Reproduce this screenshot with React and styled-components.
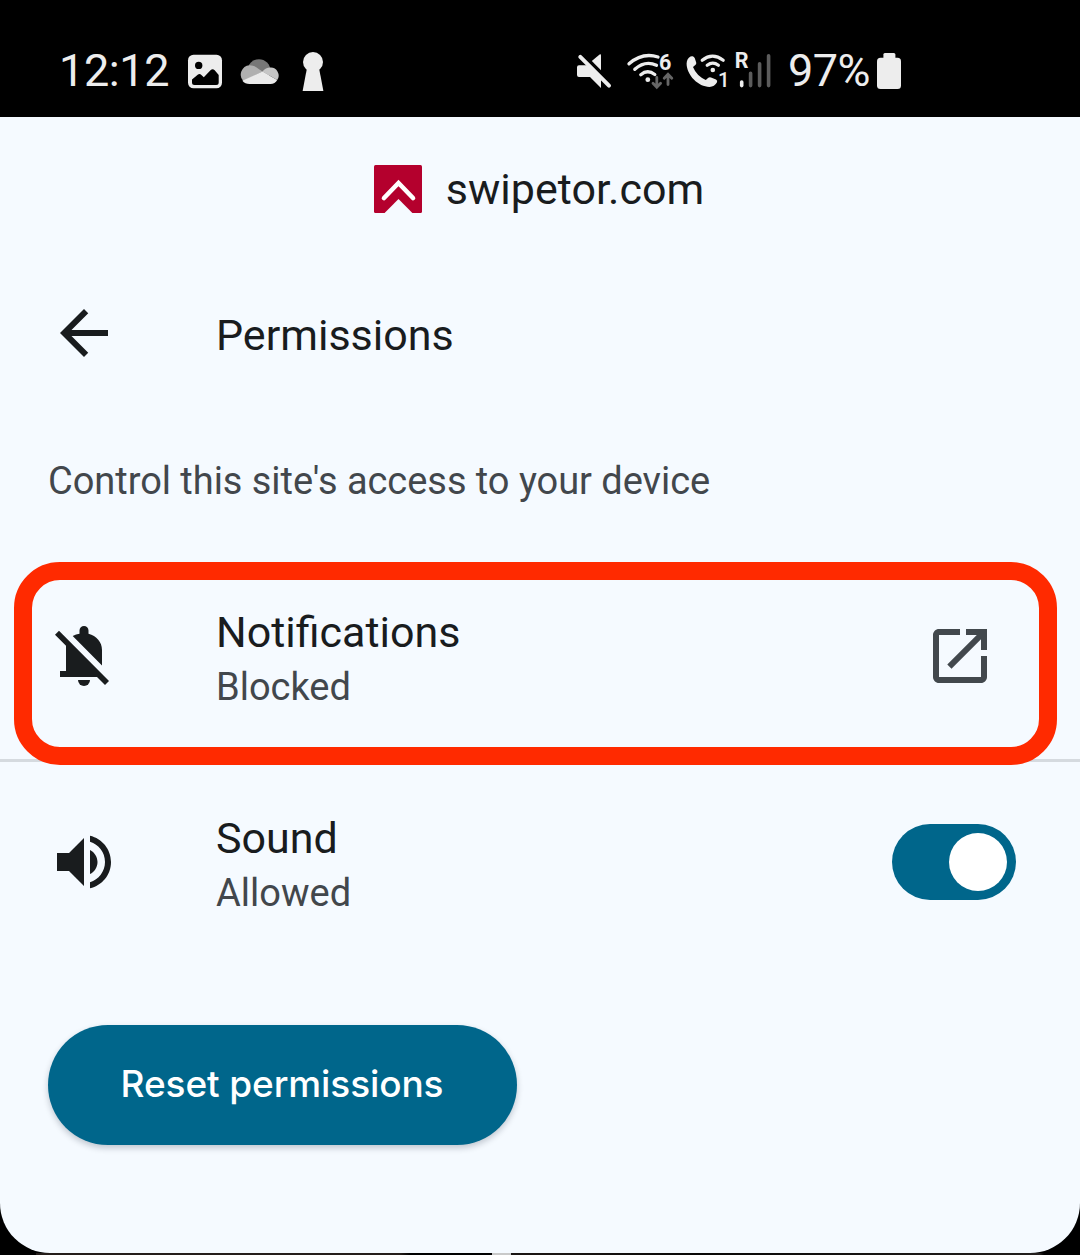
import React from "react";
import styled, { createGlobalStyle } from "styled-components";

const GlobalStyle = createGlobalStyle`
  *, *::before, *::after { box-sizing: border-box; }
  body { margin: 0; background: #000; font-family: Roboto, "Liberation Sans", sans-serif; }
`;

const Screen = styled.div`
  width: 1080px;
  height: 1255px;
  display: flex;
  flex-direction: column;
  background: #000;
  overflow: hidden;
`;

const StatusBar = styled.header`
  flex: none;
  height: 117px;
  padding: 49px 179px 24px 59px;
  display: flex;
  justify-content: space-between;
  color: #ededed;
`;

const StatusGroup = styled.div`
  display: flex;
  align-items: center;
  height: 44px;
`;

const StatusText = styled.span`
  display: block;
  font-size: ${(p) => p.$size}px;
  line-height: 44px;
  letter-spacing: ${(p) => p.$spacing}px;
  width: ${(p) => p.$width}px;
  padding-left: ${(p) => p.$start || 0}px;
  white-space: nowrap;
`;

const StatusIcon = styled.svg`
  flex: none;
  display: block;
  height: 44px;
  margin-left: ${(p) => p.$gap || 0}px;
  overflow: visible;
  font-family: Roboto, sans-serif;
  font-weight: 700;
`;

const Sheet = styled.main`
  flex: none;
  height: 1136px;
  display: flex;
  flex-direction: column;
  align-items: stretch;
  background: #f5faff;
  border-radius: 0 0 50px 50px;
  color: #191c1e;
`;

const SiteHeader = styled.div`
  height: 144px;
  padding-right: 2px;
  display: flex;
  align-items: center;
  justify-content: center;
  gap: 24px;
`;

const SiteName = styled.span`
  font-size: 43px;
  line-height: 50px;
  letter-spacing: 0.04px;
`;

const TitleRow = styled.div`
  height: 144px;
  padding: 0 48px;
  display: flex;
  align-items: center;
  gap: 96px;
`;

const Title = styled.h1`
  margin: 4px 0 0;
  font-size: 43px;
  line-height: 50px;
  font-weight: 400;
`;

const Description = styled.p`
  margin: 0;
  height: 148px;
  padding: 53px 48px 0;
  font-size: 38px;
  line-height: 46px;
  letter-spacing: -0.04px;
  color: #42474c;
`;

const PermissionRow = styled.section`
  position: relative;
  height: ${(p) => p.$height}px;
  padding: 0 ${(p) => p.$end}px 0 48px;
  display: flex;
  align-items: center;
  gap: 96px;
  border-bottom: ${(p) => (p.$divided ? "3px solid #d5dadf" : "0")};
`;

const Highlight = styled.div`
  position: absolute;
  top: 9px;
  left: 14px;
  width: 1043px;
  height: 203px;
  border: 18px solid #ff2a00;
  border-radius: 46px;
  pointer-events: none;
`;

const Labels = styled.div`
  flex: 1;
  margin-top: 8px;
`;

const Name = styled.div`
  font-size: 43px;
  line-height: 54px;
`;

const State = styled.div`
  font-size: 38px;
  line-height: 56px;
  color: #42474c;
`;

const Glyph = styled.svg`
  flex: none;
  display: block;
  width: 72px;
  height: 72px;
  fill: ${(p) => p.$color || "#191c1e"};
`;

const Switch = styled.button`
  flex: none;
  width: 124px;
  height: 76px;
  padding: 0 9px;
  border: 0;
  border-radius: 38px;
  background: #00668b;
  display: flex;
  align-items: center;
  justify-content: flex-end;
`;

const Knob = styled.span`
  width: 58px;
  height: 58px;
  border-radius: 50%;
  background: #fff;
`;

const ResetButton = styled.button`
  margin: 63px 0 0 48px;
  align-self: flex-start;
  width: 469px;
  height: 120px;
  padding: 0 1px 2px 0;
  border: 0;
  border-radius: 60px;
  background: #00668b;
  color: #fff;
  font: 500 37px/46px Inter, sans-serif;
  letter-spacing: -0.1px;
  white-space: nowrap;
  box-shadow: 0 3px 6px rgba(0, 20, 35, 0.22);
`;

const PageEdge = styled.div`
  height: 2px;
  background: linear-gradient(90deg, #000 36px, #241d1a 36px 400px, #000 410px 492px, #c9c9c9 492px 511px, #1a1513 511px 560px, #080706 700px, #231f1d 1040px, #000 1044px);
`;

function Logo() {
  return (
    <svg width="48" height="48" viewBox="0 0 48 48">
      <rect width="48" height="48" rx="1.5" fill="#b4002d" />
      <path d="M10 33 24.5 18 39 33" fill="none" stroke="#fff" strokeWidth="4.6" strokeLinecap="round" />
      <path d="M10.6 48 24.5 34 38.4 48z" fill="#f5faff" />
    </svg>
  );
}

function ClockSide() {
  return (
    <StatusGroup>
      <StatusText $size={45} $spacing={-0.4} $width={129}>12:12</StatusText>
      <StatusIcon width="34" viewBox="188 49 34 44">
        <rect x="188" y="54.7" width="34" height="33.6" rx="5.5" fill="#ededed" />
        <circle cx="198.7" cy="65.4" r="3.7" fill="#000" />
        <path d="M192 79.5 198 74.6Q199.7 73.4 201.4 75L203.8 77.2 210.5 70.3Q212.6 68.2 214.7 70.3L218.7 75V82.5Q218.7 85 216.2 85H194.5Q192 85 192 82.5z" fill="#000" />
      </StatusIcon>
      <StatusIcon $gap={18} width="38" viewBox="240 49 38 44">
        <circle cx="259" cy="70.6" r="11.4" fill="#777" />
        <path d="M249.5 65.2C253.5 65.2 256.4 67 259 69.2L262.5 71.4 243.5 81.3A9.5 9.5 0 0 1 249.5 65.2z" fill="#b0b0b0" />
        <path d="M262.5 71.4Q265.6 67.6 270.3 67.6A7.9 7.9 0 0 1 277.2 80z" fill="#c6c6c6" />
        <path d="M262.5 71.4 277.2 80Q275 84 270.5 84H249.5Q245 84 242.4 80.8z" fill="#eaeaea" />
      </StatusIcon>
      <StatusIcon $gap={24} width="22" viewBox="302 49 22 44">
        <circle cx="313" cy="62" r="10" fill="#ededed" />
        <path d="M306.8 69H319.2L323.4 91H302.6z" fill="#ededed" />
      </StatusIcon>
    </StatusGroup>
  );
}

function SignalSide() {
  return (
    <StatusGroup>
      <StatusIcon width="35" viewBox="576 49 35 44" fill="#ededed">
        <path d="M591.8 61 599.6 54.6Q601 53.6 601 55.2V70.3z" />
        <path d="M579 65.3H588L601 78V88L590 77H579Q577 77 577 75V67.3Q577 65.3 579 65.3z" />
        <path d="M580.3 56.8 609 85.6" stroke="#ededed" strokeWidth="4" strokeLinecap="round" />
      </StatusIcon>
      <StatusIcon $gap={16} width="47" viewBox="627 49 47 44" fill="none" strokeLinecap="round">
        <g stroke="#ededed" strokeWidth="3.3">
          <path d="M629 63.8Q642.5 52 658 57" />
          <path d="M634.8 69.3Q645 60 656.5 65.2" />
          <path d="M640.8 74.7Q647.5 69 654.8 74.5" />
        </g>
        <circle cx="647.8" cy="79.7" r="2.4" fill="#ededed" />
        <text x="659" y="69.8" fontSize="21.5" fill="#ededed">6</text>
        <g stroke="#666" strokeWidth="2.8">
          <path d="M656.8 77.5V87M653 83.3 656.8 87.2 660.6 83.3" />
          <path d="M668 84.5V74.3M664.2 78.2 668 74.3 671.8 78.2" />
        </g>
      </StatusIcon>
      <StatusIcon $gap={12} width="43" viewBox="686 49 43 44" fill="none">
        <path d="M692.6 56.2Q694.2 56.6 694.8 58.2L696.2 62.5Q696.6 64 695.3 65.1L693 67Q696.5 75.8 705.8 80L708.3 77.8Q709.5 76.9 711 77.5L716 79.6Q717.8 80.5 717 82.3Q714.5 86.9 709.5 86.9C698.5 86.9 686.6 75.2 686.6 63.5Q686.8 58.5 690.5 56.5Q691.5 56 692.6 56.2z" fill="#ededed" />
        <g stroke="#ededed" strokeWidth="3.2" strokeLinecap="round">
          <path d="M702.2 60.2Q712.5 52.2 723.2 60.2" />
          <path d="M707.2 65.2Q712.8 61 718.4 65.2" />
        </g>
        <circle cx="712.8" cy="70" r="2.3" fill="#ededed" />
        <text x="718" y="87" fontSize="20.5" fontWeight="500" fill="#ededed">1</text>
      </StatusIcon>
      <StatusIcon $gap={6} width="36" viewBox="735 49 36 44" strokeWidth="3.6" strokeLinecap="round">
        <text x="734.8" y="67.8" fontSize="21.5" fill="#ededed">R</text>
        <path d="M741.7 82V85.6" stroke="#ededed" />
        <path d="M750.6 73.2V85.6M759.6 63.8V85.6M768.6 55.8V85.6" stroke="#5c5c5c" />
      </StatusIcon>
      <StatusText $size={45} $spacing={-0.5} $width={106} $start={17}>97%</StatusText>
      <StatusIcon width="24" viewBox="877 49 24 44" fill="#ededed">
        <rect x="883.4" y="53" width="12" height="8" rx="1.5" />
        <rect x="877" y="57.7" width="24" height="31.3" rx="3.5" />
      </StatusIcon>
    </StatusGroup>
  );
}

export default function App() {
  return (
    <>
      <GlobalStyle />
      <Screen>
        <StatusBar>
          <ClockSide />
          <SignalSide />
        </StatusBar>
        <Sheet>
          <SiteHeader>
            <Logo />
            <SiteName>swipetor.com</SiteName>
          </SiteHeader>
          <TitleRow>
            <Glyph viewBox="0 0 24 24">
              <path d="M20 11H7.83l5.59-5.59L12 4l-8 8 8 8 1.41-1.41L7.83 13H20v-2z" />
            </Glyph>
            <Title>Permissions</Title>
          </TitleRow>
          <Description>Control this site's access to your device</Description>
          <PermissionRow $height={209} $end={84} $divided>
            <Glyph viewBox="0 0 72 72">
              <path d="M7 14.7 11 10.8 61 61 57 65 49 57H12V51H18V25.7z" />
              <path d="M24.7 16Q28 14.3 31.5 13.8V10.5a4.5 4.5 0 0 1 9 0V13.8C48.5 16 54 22 54 30V45.6z" />
              <path d="M30 60H42A6 6 0 0 1 30 60z" />
            </Glyph>
            <Labels>
              <Name>Notifications</Name>
              <State>Blocked</State>
            </Labels>
            <Glyph $color="#42484d" viewBox="0 0 24 24">
              <path d="M19 19H5V5h7V3H5c-1.11 0-2 .9-2 2v14c0 1.1.89 2 2 2h14c1.1 0 2-.9 2-2v-7h-2v7zM14 3v2h3.59l-9.83 9.83 1.41 1.41L19 6.41V10h2V3h-7z" />
            </Glyph>
            <Highlight />
          </PermissionRow>
          <PermissionRow $height={200} $end={64}>
            <Glyph viewBox="0 0 24 24">
              <path d="M3 9v6h4l5 5V4L7 9H3zm13.5 3c0-1.77-1.02-3.29-2.5-4.03v8.05c1.48-.73 2.5-2.25 2.5-4.02zM14 3.23v2.06c2.89.86 5 3.54 5 6.71s-2.11 5.85-5 6.71v2.06c4.01-.91 7-4.49 7-8.77s-2.99-7.86-7-8.77z" />
            </Glyph>
            <Labels>
              <Name>Sound</Name>
              <State>Allowed</State>
            </Labels>
            <Switch role="switch" aria-checked="true">
              <Knob />
            </Switch>
          </PermissionRow>
          <ResetButton>Reset permissions</ResetButton>
        </Sheet>
        <PageEdge />
      </Screen>
    </>
  );
}
